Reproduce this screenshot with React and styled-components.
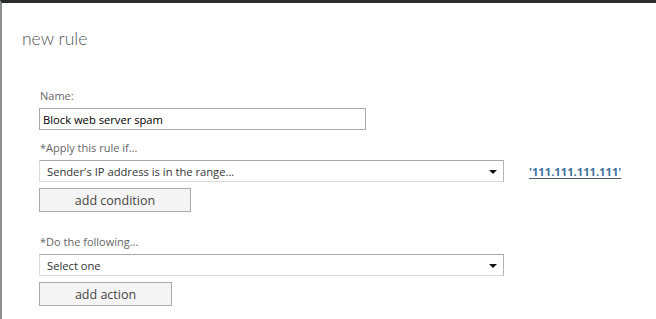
import React from 'react';
import styled, { createGlobalStyle } from 'styled-components';

const GlobalStyle = createGlobalStyle`
  html, body {
    margin: 0;
    padding: 0;
    background: #ffffff;
  }
  body {
    font-family: "Open Sans", "Noto Sans", "Liberation Sans", sans-serif;
    color: #333333;
  }
`;

const Page = styled.div`
  height: 319px;
  box-sizing: border-box;
  border-top: 3px solid #2b2c2e;
  border-left: 2px solid #8e8e8e;
  overflow: hidden;
`;

const Title = styled.h1`
  margin: 23px 0 0 20px;
  font-family: "Lato", "Open Sans", sans-serif;
  font-size: 17.5px;
  line-height: 26px;
  font-weight: 300;
  color: #555555;
`;

const Form = styled.div`
  display: flex;
  flex-direction: column;
  padding: 36px 0 0 37px;
`;

const Field = styled.div`
  display: flex;
  flex-direction: column;
  align-items: flex-start;
  margin-bottom: ${p => p.$space}px;
`;

const Label = styled.label`
  font-size: 11px;
  line-height: 16px;
  color: #666666;
  margin: 0 0 4px 1px;
`;

const TextInput = styled.input`
  width: 327px;
  height: 22px;
  box-sizing: border-box;
  border: 1px solid #a9a9a9;
  padding: 0 3px;
  font-family: inherit;
  font-size: 11.2px;
  color: #000000;
  outline: none;
`;

const Row = styled.div`
  display: flex;
  align-items: center;
  gap: 25px;
`;

const Dropdown = styled.div`
  width: 465px;
  height: 22px;
  box-sizing: border-box;
  display: flex;
  align-items: center;
  justify-content: space-between;
  padding: 0 6px 0 7px;
  border: 1px solid #dadada;
  border-top-color: #a9a9a9;
  border-right-color: #b4b4b4;
  font-size: 11.2px;
  color: #333333;
`;

const Arrow = styled.span`
  width: 0;
  height: 0;
  border-left: 4px solid transparent;
  border-right: 4px solid transparent;
  border-top: 4px solid #111111;
  margin-top: 2px;
`;

const ValueLink = styled.a`
  font-size: 11.2px;
  font-weight: 700;
  color: #3f719c;
  text-decoration: underline;
  text-decoration-color: #4a5d70;
  text-underline-offset: 2px;
  cursor: pointer;
`;

const Button = styled.button`
  width: ${p => p.$width}px;
  height: 24px;
  margin-top: 6px;
  box-sizing: border-box;
  border: 1px solid #ababab;
  background: #f4f4f4;
  font-family: inherit;
  font-size: 12.5px;
  color: #444444;
  cursor: pointer;
`;

const App = () => {
  return (
    <>
      <GlobalStyle />
      <Page>
        <Title>new rule</Title>
        <Form>
          <Field $space={10}>
            <Label>Name:</Label>
            <TextInput defaultValue="Block web server spam" />
          </Field>
          <Field $space={22}>
            <Label>*Apply this rule if...</Label>
            <Row>
              <Dropdown>
                <span>Sender's IP address is in the range...</span>
                <Arrow />
              </Dropdown>
              <ValueLink>'111.111.111.111'</ValueLink>
            </Row>
            <Button $width={152}>add condition</Button>
          </Field>
          <Field $space={0}>
            <Label>*Do the following...</Label>
            <Dropdown>
              <span>Select one</span>
              <Arrow />
            </Dropdown>
            <Button $width={133}>add action</Button>
          </Field>
        </Form>
      </Page>
    </>
  );
};

export default App;
